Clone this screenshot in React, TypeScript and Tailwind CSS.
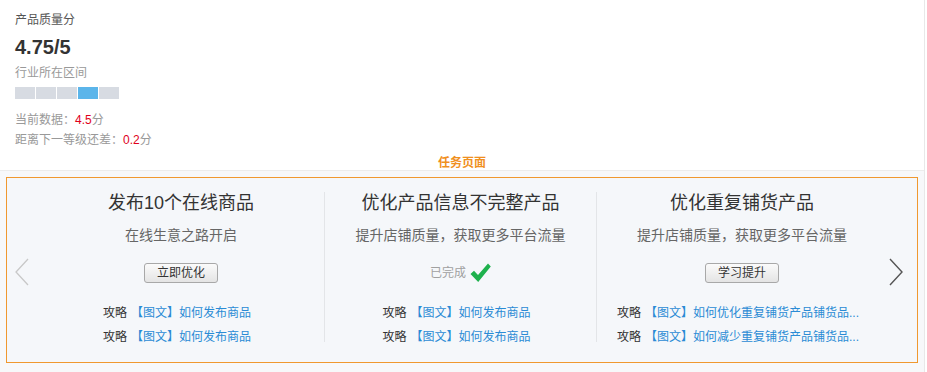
import React from "react";

const font = { fontFamily: '"Liberation Sans", "Noto Sans CJK SC", sans-serif' };

type Task = {
  title: string;
  sub: string;
  action?: string;
  done?: boolean;
  links: string[];
  width: string;
};

const tasks: Task[] = [
  {
    title: "发布10个在线商品",
    sub: "在线生意之路开启",
    action: "立即优化",
    links: ["如何发布商品", "如何发布商品"],
    width: "w-[286px]",
  },
  {
    title: "优化产品信息不完整产品",
    sub: "提升店铺质量，获取更多平台流量",
    done: true,
    links: ["如何发布商品", "如何发布商品"],
    width: "w-[271px]",
  },
  {
    title: "优化重复铺货产品",
    sub: "提升店铺质量，获取更多平台流量",
    action: "学习提升",
    links: ["如何优化重复铺货产品铺货品...", "如何减少重复铺货产品铺货品..."],
    width: "w-[290px]",
  },
];

function TaskColumn({ t }: { t: Task }) {
  return (
    <div className={`${t.width} flex flex-col items-center pt-[13px]`}>
      <div className="text-[18px] leading-[24px] text-[#333]">{t.title}</div>
      <div className="mt-[10px] text-[14px] leading-[20px] text-[#666]">{t.sub}</div>
      <div className="mt-[18px] h-[20px] flex items-center">
        {t.done ? (
          <div className="flex items-center gap-[4px]">
            <span className="text-[12px] text-[#a0a0a0]">已完成</span>
            <svg width="21" height="20" viewBox="0 0 21 20">
              <path d="M0.5 11 L4 7.8 L8 12 L18 0.5 L20.8 3.5 L8.2 19 Z" fill="#1eb14d" />
            </svg>
          </div>
        ) : (
          <button className="w-[74px] h-[20px] rounded-[3px] border border-[#a8a8a8] bg-gradient-to-b from-[#fbfbfb] to-[#e4e4e4] text-[12px] leading-[18px] text-[#333]">
            {t.action}
          </button>
        )}
      </div>
      <div className="mt-[18px] flex flex-col pr-[8px]">
        {t.links.map((l, i) => (
          <div key={i} className="text-[12px] leading-[24px] whitespace-nowrap">
            <span className="text-[#333]">攻略</span>
            <span className="ml-[4px] text-[#2a8bd5]">【图文】{l}</span>
          </div>
        ))}
      </div>
    </div>
  );
}

export default function App() {
  return (
    <div className="w-[925px] h-[372px] border-r border-[#e8e8e8] bg-white" style={font}>
      <div className="px-[15px] pt-[12px] border-b border-[#ececec]">
        <div className="text-[12px] leading-[16px] text-[#555]">产品质量分</div>
        <div className="mt-[7px] text-[20px] leading-[24px] font-bold text-[#333]">4.75/5</div>
        <div className="mt-[6px] text-[12px] leading-[16px] text-[#999]">行业所在区间</div>
        <div className="mt-[6px] flex gap-[1px]">
          {[0, 1, 2, 3, 4].map((i) => (
            <div
              key={i}
              className={`w-[20px] h-[12px] ${i === 3 ? "bg-[#5bb5ea]" : "bg-[#d7dbe2]"}`}
            />
          ))}
        </div>
        <div className="mt-[11px] text-[12px] leading-[20px] text-[#999]">
          当前数据：<span className="text-[#e0001b]">4.5</span>分
        </div>
        <div className="text-[12px] leading-[20px] text-[#999]">
          距离下一等级还差：<span className="text-[#e0001b]">0.2</span>分
        </div>
        <div className="mt-[6px] text-center text-[12px] leading-[14px] font-bold text-[#f0901e]">
          任务页面
        </div>
      </div>
      <div className="bg-[#f7f8fa] px-[6px] pt-[6px] h-[201px]">
        <div className="h-[186px] border border-[#f0982f] bg-[#f5f7fa] flex">
          <div className="w-[31px] flex items-start pt-[80px] pl-[7px]">
            <svg width="16" height="28" viewBox="0 0 16 28">
              <polyline points="14,1 2,14 14,27" fill="none" stroke="#c8c8c8" strokeWidth="1.3" />
            </svg>
          </div>
          <TaskColumn t={tasks[0]} />
          <div className="w-[1px] mt-[14px] h-[150px] bg-[#e3e5e8]" />
          <TaskColumn t={tasks[1]} />
          <div className="w-[1px] mt-[14px] h-[150px] bg-[#e3e5e8]" />
          <TaskColumn t={tasks[2]} />
          <div className="flex-1 flex items-start pt-[80px] pl-[1px]">
            <svg width="16" height="28" viewBox="0 0 16 28">
              <polyline points="2,1 14,14 2,27" fill="none" stroke="#555" strokeWidth="1.4" />
            </svg>
          </div>
        </div>
      </div>
    </div>
  );
}
